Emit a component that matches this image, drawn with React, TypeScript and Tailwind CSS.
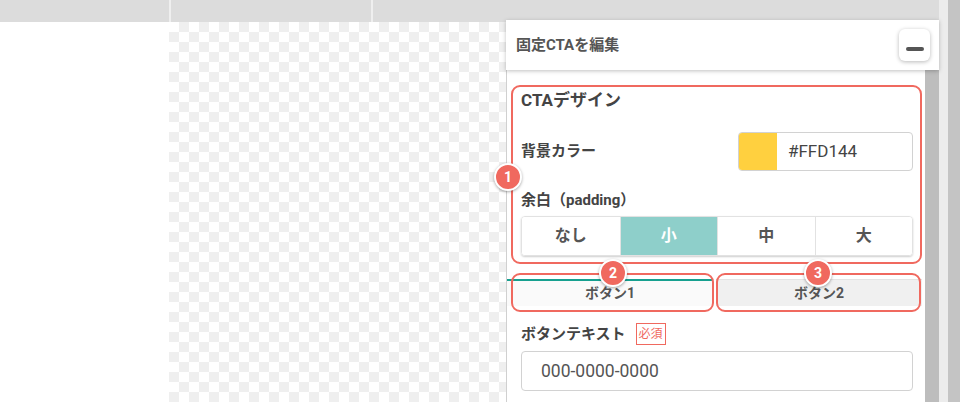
import React from "react";

const Badge = ({ n, className }: { n: string; className: string }) => (
  <div
    className={
      "absolute z-20 flex h-[28px] w-[28px] items-center justify-center rounded-full border-2 border-white bg-[#f0695f] text-[14px] font-bold leading-none text-white shadow-[0_1px_3px_rgba(0,0,0,0.35)] " +
      className
    }
  >
    {n}
  </div>
);

export default function App() {
  const segs = ["なし", "小", "中", "大"];
  return (
    <div className="flex h-[402px] w-[960px] overflow-hidden bg-white font-['Roboto','Noto_Sans_CJK_JP',sans-serif]">
      <div className="flex w-[939px] flex-col">
        {/* top bar */}
        <div className="flex h-[22px] shrink-0">
          <div className="w-[169px] bg-[#dcdcdc]" />
          <div className="w-[2px] bg-[#efefef]" />
          <div className="w-[200px] bg-[#dcdcdc]" />
          <div className="w-[2px] bg-[#efefef]" />
          <div className="flex-1 bg-[#dcdcdc]" />
        </div>
        {/* content */}
        <div className="flex min-h-0 flex-1">
          <div className="w-[169px] bg-white" />
          <div className="flex-1 bg-[image:repeating-conic-gradient(#efefef_0_25%,#ffffff_0_50%)] bg-[length:20px_20px]" />
          <div className="relative z-10 -mt-[2px] flex w-[433px] flex-col">
            {/* header */}
            <div className="relative z-10 flex h-[50px] shrink-0 items-center justify-between bg-white pl-[10px] pr-[9px] shadow-[0_1px_4px_rgba(0,0,0,0.25)]">
              <span className="text-[15px] font-bold text-[#555]">固定CTAを編集</span>
              <div className="flex h-[32px] w-[31px] items-end justify-center rounded-[6px] bg-white pb-[10px] shadow-[0_1px_4px_rgba(0,0,0,0.28)]">
                <div className="h-[4px] w-[18px] rounded-full bg-[#555]" />
              </div>
            </div>
            {/* body */}
            <div className="flex min-h-0 flex-1">
              <div className="w-[419px] border-l border-[#d0d0d0] bg-white pt-[15px]">
                {/* section 1 */}
                <div className="relative ml-[4px] w-[411px] rounded-[9px] border-2 border-[#f0695f] pb-[6px] pl-[8px] pr-[7px] pt-[3px]">
                  <Badge n="1" className="left-[-19px] top-[76px]" />
                  <div className="text-[17px] font-bold leading-[20px] text-[#444]">CTAデザイン</div>
                  <div className="mt-[22px] flex h-[39px] items-center justify-between">
                    <span className="text-[15px] font-bold text-[#444]">背景カラー</span>
                    <div className="flex h-[39px] w-[175px] overflow-hidden rounded-[4px] border border-[#d2d2d2]">
                      <div className="w-[38px] bg-[#ffd03f]" />
                      <div className="flex items-center pl-[11px] text-[17px] text-[#444]">#FFD144</div>
                    </div>
                  </div>
                  <div className="mt-[19px] text-[15px] font-bold leading-[20px] text-[#444]">余白（padding）</div>
                  <div className="mt-[6px] grid h-[40px] grid-cols-4 overflow-hidden rounded-[4px] border border-[#e2e2e2] shadow-[0_1px_2px_rgba(0,0,0,0.2)]">
                    {segs.map((s, i) => (
                      <div
                        key={s}
                        className={
                          "flex items-center justify-center text-[16px] font-bold " +
                          (i === 1 ? "bg-[#8ecfca] text-white " : "bg-white text-[#555] ") +
                          (i > 0 ? "border-l border-[#e2e2e2]" : "")
                        }
                      >
                        {s}
                      </div>
                    ))}
                  </div>
                </div>
                {/* tabs */}
                <div className="relative mt-[15px] flex h-[27px]">
                  <div className="flex w-[206px] items-center justify-center border-t-2 border-[#16a08f] bg-[#fafafa] text-[14px] font-bold text-[#555]">
                    ボタン1
                  </div>
                  <div className="ml-[3px] flex w-[206px] items-center justify-center border-t border-[#e4e4e4] bg-[#f0f0f0] text-[14px] font-bold text-[#555]">
                    ボタン2
                  </div>
                  <div className="absolute left-[4px] top-[-6px] h-[39px] w-[203px] rounded-[9px] border-2 border-[#f0695f]" />
                  <div className="absolute left-[209px] top-[-6px] h-[39px] w-[205px] rounded-[9px] border-2 border-[#f0695f]" />
                  <Badge n="2" className="left-[92px] top-[-20px]" />
                  <Badge n="3" className="left-[297px] top-[-20px]" />
                </div>
                {/* button text */}
                <div className="ml-[14px] mt-[18px] flex h-[20px] items-center">
                  <span className="text-[15px] font-bold text-[#444]">ボタンテキスト</span>
                  <span className="ml-[10px] flex h-[22px] w-[30px] items-center justify-center border border-[#f0695f] text-[12px] text-[#f0695f]">
                    必須
                  </span>
                </div>
                <div className="ml-[14px] mt-[7px] flex h-[40px] w-[392px] items-center rounded-[4px] border border-[#d2d2d2] pl-[19px] text-[17.5px] text-[#555]">
                  000-0000-0000
                </div>
              </div>
              <div className="w-[14px] bg-[#bdbdbd]" />
            </div>
          </div>
        </div>
      </div>
      <div className="w-[9px] bg-[#ececec]" />
      <div className="flex-1 bg-[#c4c4c4]" />
    </div>
  );
}
